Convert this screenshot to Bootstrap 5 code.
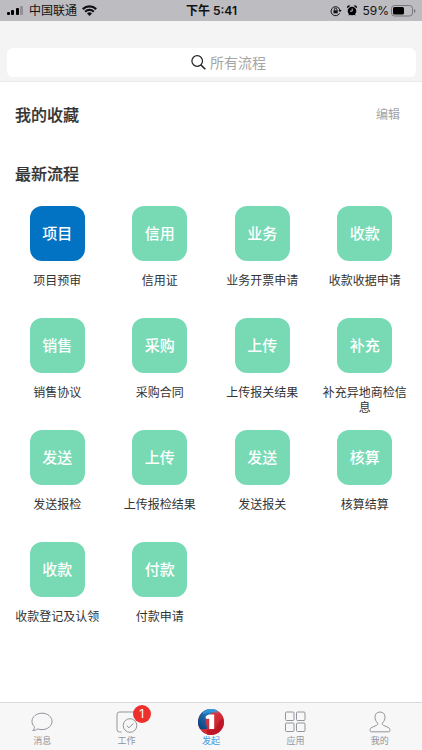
<!DOCTYPE html>
<html lang="zh-CN">
<head>
<meta charset="utf-8">
<meta name="viewport" content="width=device-width, initial-scale=1">
<title>发起</title>
<link href="https://cdn.jsdelivr.net/npm/bootstrap@5.3.0/dist/css/bootstrap.min.css" rel="stylesheet">
<style>
  body { font-family: Inter, "Noto Sans CJK SC", sans-serif; color: #333; background: #fff; }
  svg { display: block; flex: none; }
  .status { height: 21px; background: #bdbcc1; color: #111; font-size: 12px; line-height: 21px; padding: 0 6px 0 7px; }
  .status > * { flex: 1 1 0; }
  .status .glyphs { gap: 5px; }
  .status .power { gap: 2px; }
  .top-area { background: #f4f4f5; padding: 27px 6px 4px 7px; border-bottom: 1px solid #e9e9ea; }
  .search { background: #fff; border-radius: 6px; height: 29px; padding-left: 45%; color: #222; cursor: text; }
  .search input { font-size: 14px; line-height: 20px; min-width: 0; outline: 0; }
  .search input::placeholder { color: #a5a5a5; opacity: 1; }
  .section-head { padding: 21px 22px 12px 15px; }
  .section-head + .section-head { padding: 23px 22px 20px 15px; }
  .section-head h2 { font-size: 16px; line-height: 24px; font-weight: 500; -webkit-text-stroke: 0.2px; }
  .edit { font-size: 12px; line-height: 24px; color: #a3a3a3; }
  .flows { padding: 0 6px; }
  .flow { height: 112px; padding: 0 7px; color: #333; font-size: 12px; line-height: 15px; }
  .flow:hover { color: #333; }
  .tile { width: 55px; height: 55px; border-radius: 12px; background: #77dab4; color: #fff; font-size: 15px; line-height: 20px; font-weight: 500; margin-bottom: 12px; }
  .tile.blue { background: #0273c2; }
  .tabs { background: #f7f7f8; border-top: 1px solid #d9dadd; height: 48px; }
  .tabs a { flex: 1 1 0; padding-top: 5px; color: #92959a; font-size: 9px; line-height: 12px; }
  .tabs a.active { color: #3c9be6; }
  .tab-icon { height: 27px; }
  .count { left: 17px; top: -3px; width: 18px; height: 18px; background: #ee302d; color: #fff; font-size: 12px; line-height: 18px; }
</style>
<script src="https://cdn.jsdelivr.net/npm/bootstrap@5.3.0/dist/js/bootstrap.bundle.min.js"></script>
</head>
<body>
<div class="d-flex flex-column min-vh-100">
  <div class="status d-flex align-items-center">
    <div class="glyphs d-flex align-items-center">
      <svg width="17" height="10" viewBox="0 0 17 10"><rect x="0" y="6" width="3" height="3" rx="1"/><rect x="4" y="4" width="3" height="5" rx="1"/><rect x="9" y="2" width="3" height="7" rx="1"/><rect x="13" y="0" width="3" height="9" rx="1" fill="#929197"/></svg>
      <span>中国联通</span>
      <svg width="15" height="11" viewBox="0 0 15 11" fill="none" stroke="#111" stroke-width="2.200"><path d="M.8 4.100a9.600 9.600 0 0 1 13.400 0M3.200 6.700a6.100 6.100 0 0 1 8.600 0"/><path d="M7.500 11 5 8.400a3.600 3.600 0 0 1 5 0z" fill="#111" stroke="none"/></svg>
    </div>
    <div class="text-center fw-semibold">下午 5:41</div>
    <div class="glyphs d-flex align-items-center justify-content-end">
      <svg width="12" height="12" viewBox="0 0 12 12" fill="none" stroke="#111"><path d="M9.600 8.200A4.500 4.500 0 1 1 9.900 5"/><path d="M8.300 5h3.400L10 7.300z" fill="#111" stroke="none"/><rect x="3.500" y="5.300" width="4.200" height="3" fill="#111" stroke="none"/><path d="M4.400 5.600V4.400a1.200 1.200 0 0 1 2.400 0v1.200"/></svg>
      <svg width="10" height="11" viewBox="0 0 10 11"><circle cx="5" cy="6" r="4.300"/><path d="M.3 3.200A2 2 0 0 1 3.300.7zM9.700 3.200A2 2 0 0 0 6.700.7zM1.300 10.500l1-2 1.500 1zM8.700 10.500l-1-2-1.500 1z"/><path d="M5.200 3.500v2.700H3" fill="none" stroke="#bdbcc1"/></svg>
      <div class="power d-flex align-items-center">
        <span>59%</span>
        <svg width="25" height="12" viewBox="0 0 25 12"><rect x=".5" y=".5" width="21" height="10.500" rx="3" fill="none" stroke="#77767b"/><rect x="2" y="2" width="11" height="7.500" rx="1.500"/><path d="M23 4v4q1.500-.6 1.500-2T23 4z" fill="#77767b"/></svg>
      </div>
    </div>
  </div>

  <header class="top-area">
    <label class="search d-flex align-items-center" for="q">
      <svg width="15" height="15" viewBox="0 0 15 15" fill="none" stroke="currentColor" stroke-width="1.200"><circle cx="6.200" cy="6" r="5.300"/><path d="m10 10 4.300 4.200" stroke-width="1.600"/></svg>
      <input id="q" type="search" class="border-0 bg-transparent flex-grow-1 p-0 ms-1" placeholder="所有流程" aria-label="所有流程">
    </label>
  </header>

  <main class="flex-grow-1">
    <div class="section-head d-flex justify-content-between">
      <h2 class="m-0">我的收藏</h2>
      <button type="button" class="edit border-0 bg-transparent p-0">编辑</button>
    </div>
    <div class="section-head"><h2 class="m-0">最新流程</h2></div>
    <div class="flows row row-cols-4 g-0 text-center">
      <a href="#" class="flow col d-flex flex-column align-items-center text-decoration-none"><span class="tile blue d-flex align-items-center justify-content-center">项目</span><span>项目预审</span></a>
      <a href="#" class="flow col d-flex flex-column align-items-center text-decoration-none"><span class="tile d-flex align-items-center justify-content-center">信用</span><span>信用证</span></a>
      <a href="#" class="flow col d-flex flex-column align-items-center text-decoration-none"><span class="tile d-flex align-items-center justify-content-center">业务</span><span>业务开票申请</span></a>
      <a href="#" class="flow col d-flex flex-column align-items-center text-decoration-none"><span class="tile d-flex align-items-center justify-content-center">收款</span><span>收款收据申请</span></a>
      <a href="#" class="flow col d-flex flex-column align-items-center text-decoration-none"><span class="tile d-flex align-items-center justify-content-center">销售</span><span>销售协议</span></a>
      <a href="#" class="flow col d-flex flex-column align-items-center text-decoration-none"><span class="tile d-flex align-items-center justify-content-center">采购</span><span>采购合同</span></a>
      <a href="#" class="flow col d-flex flex-column align-items-center text-decoration-none"><span class="tile d-flex align-items-center justify-content-center">上传</span><span>上传报关结果</span></a>
      <a href="#" class="flow col d-flex flex-column align-items-center text-decoration-none"><span class="tile d-flex align-items-center justify-content-center">补充</span><span>补充异地商检信息</span></a>
      <a href="#" class="flow col d-flex flex-column align-items-center text-decoration-none"><span class="tile d-flex align-items-center justify-content-center">发送</span><span>发送报检</span></a>
      <a href="#" class="flow col d-flex flex-column align-items-center text-decoration-none"><span class="tile d-flex align-items-center justify-content-center">上传</span><span>上传报检结果</span></a>
      <a href="#" class="flow col d-flex flex-column align-items-center text-decoration-none"><span class="tile d-flex align-items-center justify-content-center">发送</span><span>发送报关</span></a>
      <a href="#" class="flow col d-flex flex-column align-items-center text-decoration-none"><span class="tile d-flex align-items-center justify-content-center">核算</span><span>核算结算</span></a>
      <a href="#" class="flow col d-flex flex-column align-items-center text-decoration-none"><span class="tile d-flex align-items-center justify-content-center">收款</span><span>收款登记及认领</span></a>
      <a href="#" class="flow col d-flex flex-column align-items-center text-decoration-none"><span class="tile d-flex align-items-center justify-content-center">付款</span><span>付款申请</span></a>
    </div>
  </main>

  <nav class="tabs d-flex sticky-bottom">
    <a href="#" class="d-flex flex-column align-items-center text-decoration-none">
      <span class="tab-icon d-flex align-items-center"><svg width="22" height="20" viewBox="0 0 22 20" fill="none" stroke="currentColor"><path d="M3.300 14.600C1.700 13.100 1 11.300 1 9.400 1 4.800 5.400 1.200 11 1.200s10 3.600 10 8.200-4.400 8.200-10 8.200c-1.500 0-2.900-.2-4.200-.7-1.200 1-2.900 1.600-5 1.700 1.200-1.100 1.700-2.400 1.500-4z"/></svg></span>
      消息</a>
    <a href="#" class="d-flex flex-column align-items-center text-decoration-none">
      <span class="tab-icon d-flex align-items-center position-relative"><svg width="22" height="22" viewBox="0 0 22 22" fill="none" stroke="currentColor"><path d="M5.500 21H3.500Q1 21 1 18.500v-15Q1 1 3.500 1h14Q20 1 20 3.500V6"/><circle cx="14" cy="14.500" r="6.800"/><path d="m10.700 14.700 2.300 2.100 4.300-4.300"/></svg><span class="count position-absolute rounded-circle text-center">1</span></span>
      工作</a>
    <a href="#" class="active d-flex flex-column align-items-center text-decoration-none" aria-current="page">
      <span class="tab-icon d-flex align-items-center"><svg width="26" height="26" viewBox="0 0 26 26">
        <defs><linearGradient id="red" x2="1" y2="1"><stop stop-color="#ee4a48"/><stop offset="1" stop-color="#bd1426"/></linearGradient><linearGradient id="blue" x1="0" y1="1" x2="1" y2="0"><stop stop-color="#0a3a78"/><stop offset="1" stop-color="#2d9be0"/></linearGradient></defs>
        <circle cx="13" cy="13" r="13" fill="url(#red)"/><path d="M2 20A13 13 0 0 1 19.500 1.700C15 3 12 4.500 9.500 7.500c-2 3-2 7.500 0 12C6.500 20.500 4 20.500 2 20z" fill="url(#blue)"/><path d="M5 5.500C10 3 15 2.500 20.500 4.500l-1-2.800A13 13 0 0 0 5 2.800z" fill="#3aa3e4" opacity=".6"/><path d="M9 20.500c5 1 9.500-1 11-5.500 1-2.500 2.500-4.500 5.200-6A13 13 0 0 1 9 25.400z" fill="#b81325" opacity=".7"/><path d="M7.800 7 11 5.500h5.200V20h-5V9.800H7.800z" fill="#fff"/></svg></span>
      发起</a>
    <a href="#" class="d-flex flex-column align-items-center text-decoration-none">
      <span class="tab-icon d-flex align-items-center"><svg width="22" height="22" viewBox="0 0 22 22" fill="none" stroke="currentColor"><rect x="1.500" y="1" width="8.500" height="8.500" rx="1"/><rect x="12.500" y="1" width="8.500" height="8.500" rx="1"/><rect x="1.500" y="12" width="8.500" height="8.500" rx="1"/><rect x="12.500" y="12" width="8.500" height="8.500" rx="1"/></svg></span>
      应用</a>
    <a href="#" class="d-flex flex-column align-items-center text-decoration-none">
      <span class="tab-icon d-flex align-items-center"><svg width="22" height="22" viewBox="0 0 22 22" fill="none" stroke="currentColor"><path d="M11 1C7.800 1 6 3.200 6 6.200c0 2.400 1.100 4.300 2.500 5.800.6 1.200 0 2-1.200 2.500L3 16.300c-1.400.7-2 1.800-2 3.200 0 .9.500 1.300 1.500 1.300h17c1 0 1.500-.4 1.500-1.300 0-1.400-.6-2.500-2-3.200l-4.300-1.800c-1.200-.5-1.800-1.300-1.200-2.500C14.900 10.500 16 8.600 16 6.200 16 3.200 14.200 1 11 1z"/></svg></span>
      我的</a>
  </nav>
</div>
</body>
</html>
